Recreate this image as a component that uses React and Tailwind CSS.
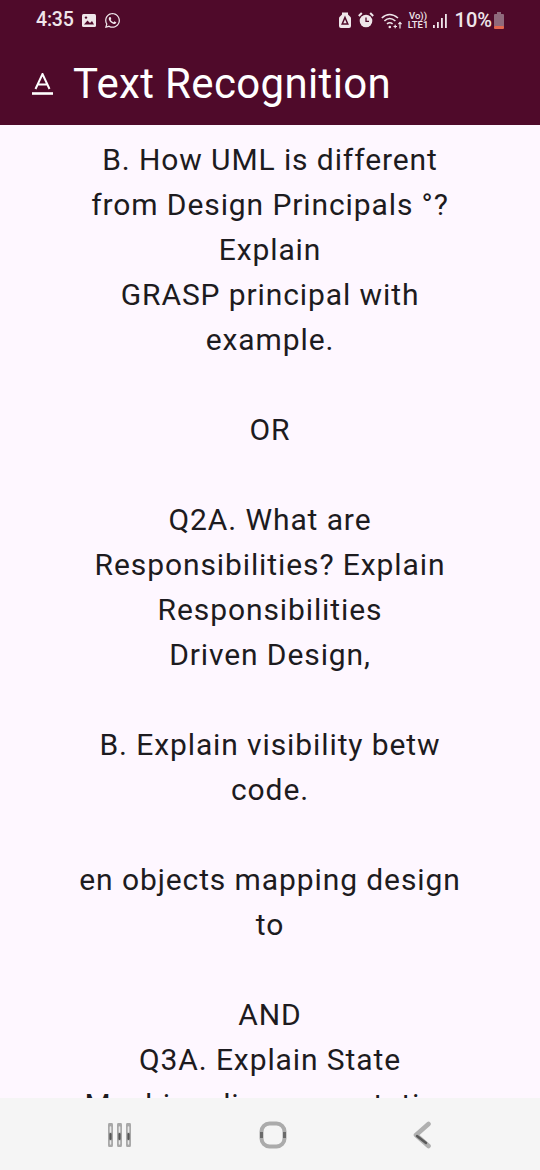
import { FaWhatsapp } from 'react-icons/fa';

const lines = [
  'B. How UML is different',
  'from Design Principals °?',
  'Explain',
  'GRASP principal with',
  'example.',
  '',
  'OR',
  '',
  'Q2A. What are',
  'Responsibilities? Explain',
  'Responsibilities',
  'Driven Design,',
  '',
  'B. Explain visibility betw',
  'code.',
  '',
  'en objects mapping design',
  'to',
  '',
  'AND',
  'Q3A. Explain State',
  'Machine diagram notation',
];

function StatusBar() {
  return (
    <div className="flex h-[40px] items-center justify-between pl-[36px] pr-[36px] text-[#efe6ea]">
      <div className="flex items-center">
        <span className="text-[19.5px] leading-none font-medium tracking-[-0.2px]">4:35</span>
        <svg width="14" height="13" viewBox="0 0 14 13" className="ml-[8px]">
          <rect x="0" y="0" width="14" height="13" rx="1.5" fill="#efe6ea" />
          <path d="M2 10.5 L5.5 6.5 L8 9 L10 7 L12 10.5 Z" fill="#4f0a2a" />
          <circle cx="4" cy="3.6" r="1.2" fill="#4f0a2a" />
        </svg>
        <FaWhatsapp className="ml-[8px] text-[17px]" />
      </div>
      <div className="flex items-center">
        {/* lock */}
        <svg width="12" height="16" viewBox="0 0 12 16" className="mr-[7px]">
          <path d="M3 0.5 H9 V2.5 L11 4.5 Q12 5 12 6.5 V14 Q12 16 10 16 H2 Q0 16 0 14 V6.5 Q0 5 1 4.5 L3 2.5 Z" fill="#efe6ea" />
          <path d="M6 5.5 L8.8 12 H3.2 Z" fill="none" stroke="#4f0a2a" strokeWidth="1.5" />
        </svg>
        {/* alarm */}
        <svg width="16" height="16" viewBox="0 0 16 16" className="mr-[7px]">
          <circle cx="8" cy="9" r="6.3" fill="#efe6ea" />
          <path d="M8 5.5 V9.3 H11" fill="none" stroke="#4f0a2a" strokeWidth="1.3" />
          <path d="M0.8 4 L3.8 1 M15.2 4 L12.2 1" stroke="#efe6ea" strokeWidth="2" />
        </svg>
        {/* wifi */}
        <svg width="21" height="17" viewBox="0 0 21 17" className="mr-[7px]" fill="none" stroke="#efe6ea" strokeWidth="1.6">
          <path d="M0.8 6 Q8.5 -1 17 6" />
          <path d="M3.4 9 Q8.5 4 14.4 9" />
          <path d="M6 11.8 Q8.8 9.6 11.6 11.8" />
          <circle cx="8.8" cy="15" r="1.3" fill="#efe6ea" stroke="none" />
          <path d="M12.5 14.5 H16 M14.2 12.7 V16.3 M19 16.5 V10.5 M17.4 12.2 L19 10.5 L20.6 12.2" strokeWidth="1.2" />
        </svg>
        <div className="mr-[5px] flex w-[19px] flex-col items-center text-[9.5px] leading-[9px] font-medium">
          <span>Vo))</span>
          <span>LTE1</span>
        </div>
        {/* signal */}
        <svg width="14" height="15" viewBox="0 0 14 15" className="mr-[8px]" fill="#efe6ea">
          <rect x="0" y="12" width="1.8" height="3" />
          <rect x="4" y="9" width="1.8" height="6" />
          <rect x="8" y="5" width="1.8" height="10" />
          <rect x="12" y="1" width="1.8" height="14" />
        </svg>
        <span className="text-[20px] leading-none font-medium">10%</span>
        {/* battery */}
        <svg width="10" height="17" viewBox="0 0 10 17" className="ml-[2px]">
          <rect x="3" y="0" width="4" height="2" fill="#8f6a7c" />
          <rect x="0" y="2" width="10" height="13" rx="1" fill="#8f6a7c" />
          <rect x="0" y="14" width="10" height="3" rx="1" fill="#e2674f" />
        </svg>
      </div>
    </div>
  );
}

function AppBar() {
  return (
    <div className="flex h-[85px] items-center pt-[3px] pl-[32px]">
      <svg width="21" height="22" viewBox="0 0 21 22" fill="none" stroke="#ffffff">
        <path d="M3.5 16 L10.5 1 L17.5 16 M6 11.5 H15" strokeWidth="2" />
        <path d="M0 20.5 H21" strokeWidth="2.6" />
      </svg>
      <h1 className="ml-[20px] text-[42px] leading-none font-normal tracking-[0.35px] text-white">Text Recognition</h1>
    </div>
  );
}

function NavBar() {
  return (
    <div className="flex h-[72px] shrink-0 items-start bg-[#f5f5f5] pt-[23px]">
      <div className="flex w-full items-center justify-between pl-[108px] pr-[109px]">
        <svg width="24" height="24" viewBox="0 0 24 24" strokeLinecap="round">
          {[2.5, 11.5, 20.5].map(x => (
            <g key={x}>
              <path d={`M${x} 2 V22`} stroke="#a8a8a8" strokeWidth="5" />
              <path d={`M${x} 4 V9`} stroke="#e8e8e8" strokeWidth="1.6" />
              <path d={`M${x} 11 V16`} stroke="#555555" strokeWidth="2.2" />
              <path d={`M${x} 18 V21`} stroke="#e8e8e8" strokeWidth="1.4" />
            </g>
          ))}
        </svg>
        <svg width="28" height="28" viewBox="0 0 28 28" fill="none">
          <rect x="2.5" y="2.5" width="23" height="23" rx="8" stroke="#ababab" strokeWidth="4" />
          <path d="M2.5 11 V17 M25.5 11 V17" stroke="#6a6a6a" strokeWidth="3" />
        </svg>
        <svg width="18" height="28" viewBox="0 0 18 28" fill="none" strokeLinecap="round" strokeLinejoin="round">
          <path d="M15.5 3 L3 14 L15.5 25" stroke="#b0b0b0" strokeWidth="4.6" />
          <path d="M4 15 L13 22" stroke="#5a5a5a" strokeWidth="2.4" />
        </svg>
      </div>
    </div>
  );
}

export default function App() {
  return (
    <div className="flex h-[1170px] w-[540px] flex-col overflow-hidden bg-[#fef7ff] font-['Roboto',sans-serif]">
      <div className="shrink-0 bg-[#4f0a2a]">
        <StatusBar />
        <AppBar />
      </div>
      <div className="min-h-0 flex-1 overflow-hidden pt-[12px] text-center text-[30px] leading-[45px] tracking-[0.9px] text-[#1d1b20]">
        {lines.map((line, i) => (
          <div key={i} className="h-[45px] whitespace-nowrap">
            {line}
          </div>
        ))}
      </div>
      <NavBar />
    </div>
  );
}
